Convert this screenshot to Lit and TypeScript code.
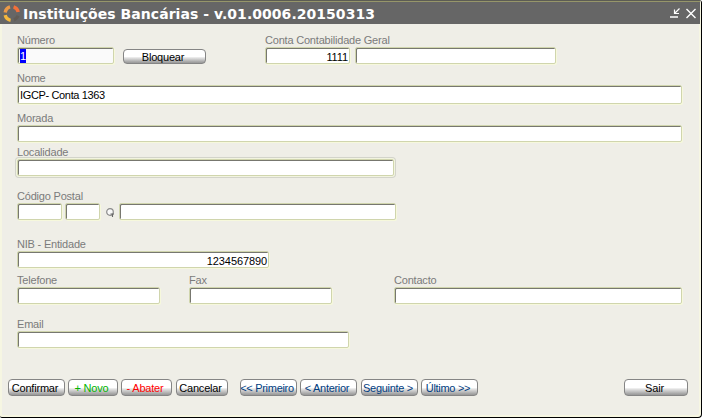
import { LitElement, html, css, svg } from "lit";
import { customElement, property } from "lit/decorators.js";
import { classMap } from "lit/directives/class-map.js";
import { styleMap } from "lit/directives/style-map.js";

@customElement("form-field")
class FormField extends LitElement {
  @property() label = "";
  @property() value = "";
  @property({ type: Number }) width = 100;
  @property({ type: Boolean }) right = false;
  @property({ type: Boolean }) focused = false;
  @property({ type: Boolean }) tall = false;
  @property({ type: Boolean }) framed = false;

  static styles = css`
    :host { display: block; flex: none; }
    .label { height: 13px; line-height: 13px; color: #7b7b7b; white-space: pre; overflow: visible; width: 0; letter-spacing: -0.2px; }
    .box {
      box-sizing: border-box; height: 17px; background: #fff;
      border: 1px solid #d0d5ad; border-radius: 2px;
      box-shadow: inset 1px 1px 0 #77776f, 1px 1px 0 #f6f8dc;
      padding: 1px 1px 0 2px; line-height: 17px; color: #000; white-space: pre; letter-spacing: -0.1px;
    }
    .tall { height: 19px; padding-top: 1px; letter-spacing: -0.35px; }
    .right { text-align: right; }
    .focused { background: #fafafa; }
    .framed { box-shadow: inset 1px 1px 0 #77776f, 0 0 0 1px #f2f4df, 0 0 0 2px #d3d4cb; }
    .sel { display: inline-block; height: 14px; line-height: 15px; background: #00f; color: #fff; vertical-align: top; }
  `;

  render() {
    const cls = { box: true, right: this.right, focused: this.focused, tall: this.tall, framed: this.framed };
    return html`
      <div class="label">${this.label}</div>
      <div class=${classMap(cls)} style=${styleMap({ width: `${this.width}px` })}>${
        this.focused ? html`<span class="sel">${this.value}</span>` : this.value
      }</div>`;
  }
}

@customElement("push-button")
class PushButton extends LitElement {
  @property() tone = "plain";
  @property({ type: Number }) width = 57;
  @property({ type: Number }) height = 17;

  static styles = css`
    :host { display: block; flex: none; }
    button {
      box-sizing: border-box; padding: 1px 3px 0 0; margin: 0;
      border: 1px solid #858585; border-radius: 4px; font: inherit; line-height: 15px;
      letter-spacing: -0.2px; white-space: pre; overflow: hidden;
      background: linear-gradient(#fff 0, #fff 50%, #e4e4e4 60%, #a4a4a4 92%, #999 100%);
      display: flex; justify-content: center; align-items: center;
    }
    .plain { color: #000; }
    .add { color: #00b400; }
    .remove { color: #f00; }
    .nav { color: #003c80; letter-spacing: -0.3px; }
  `;

  render() {
    const size = { width: `${this.width}px`, height: `${this.height}px` };
    return html`<button class=${this.tone} style=${styleMap(size)}><slot></slot></button>`;
  }
}

const logo = svg`
  <g fill="none" stroke-width="3.4">
    <path d="M10.6 1.9A6.8 6.8 0 0 1 15.2 7" stroke="#f2703a"/>
    <path d="M7 1.9A6.8 6.8 0 0 0 2.2 7.4" stroke="#eb9a48"/>
    <path d="M2.2 10.2A6.8 6.8 0 0 0 7.6 15.3" stroke="#f5b83c"/>
    <path d="M15 10.8A6.8 6.8 0 0 1 11 14.9" stroke="#625c56"/>
  </g>`;

@customElement("app-root")
class AppRoot extends LitElement {
  static styles = css`
    :host {
      display: block; width: 703px; height: 419px; box-sizing: border-box; background: #fff;
      font: 11px "Liberation Sans", Arial, sans-serif; overflow: hidden;
    }
    .window {
      box-sizing: border-box; width: 702px; height: 418px; background: #efeee7;
      border-right: 1px solid #000; border-bottom: 1px solid #000; border-radius: 0 3px 4px 2px;
      box-shadow: inset 2px 0 0 #f6f6e2, inset -2px -2px 0 #f6f6e2; overflow: hidden;
    }
    .title {
      box-sizing: border-box; width: 700px; height: 24px; background: #666; border-top: 1px solid #5c5c54;
      display: flex; align-items: center; padding: 0 4px 0 3px; color: #fff;
      box-shadow: inset 0 1px 0 #96966a;
    }
    .logo { width: 17px; height: 17px; margin-top: 1px; flex: none; }
    .name {
      font: bold 14px "DejaVu Sans", Verdana, sans-serif; margin-left: 3px; flex: 1; white-space: pre;
      line-height: 22px; padding-top: 3px; letter-spacing: 0.04px;
    }
    .glyphs { width: 28px; height: 12px; margin-top: 3px; flex: none; }
    .form {
      display: grid; grid-template-rows: 38px 40px 34px 44px 48px 36px 44px 61px 17px;
      padding: 10px 14px 0 17px;
    }
    .row { display: flex; align-items: flex-start; }
    .g3 { margin-left: 3px; }
    .g5 { margin-left: 5px; }
    .g29 { margin-left: 29px; }
    .g59 { margin-left: 59px; }
    .g62 { margin-left: 62px; }
    .block { margin: 15px 0 0 9px; }
    .lens { width: 10px; height: 11px; margin: 17px 4px 0 5px; flex: none; }
    .actions { margin: 0 0 0 -9px; gap: 3px; }
    .g1 { margin-left: 1px; }
    .g9 { margin-left: 9px; }
    .exit { margin-left: 143px; }
  `;

  render() {
    return html`
      <div class="window">
        <div class="title">
          <svg class="logo" viewBox="0 0 17 17">${logo}</svg>
          <div class="name">Instituições Bancárias - v.01.0006.20150313</div>
          <svg class="glyphs" viewBox="0 0 28 12" fill="none" stroke="#fff">
            <path d="M2 9H10" stroke-width="1.4"/>
            <path d="M11.5 0.5L6.5 5.5M6.5 1.5V5.5H11" stroke-width="1.2"/>
            <path d="M18.5 1L27.5 10M27.5 1L18.5 10" stroke-width="1.4"/>
          </svg>
        </div>
        <div class="form">
          <div class="row">
            <form-field label="Número" value="1" width="97" focused></form-field>
            <push-button class="block" width="83" height="15">Bloquear</push-button>
            <form-field class="g59" label="Conta Contabilidade Geral" value="1111" width="85" right></form-field>
            <form-field class="g5" width="201"></form-field>
          </div>
          <div class="row"><form-field label="Nome" value="IGCP- Conta 1363" width="665" tall></form-field></div>
          <div class="row"><form-field label="Morada" width="665"></form-field></div>
          <div class="row"><form-field label="Localidade" width="377" framed></form-field></div>
          <div class="row">
            <form-field label="Código Postal" width="45"></form-field>
            <form-field class="g3" width="35"></form-field>
            <svg class="lens" viewBox="0 0 10 11" fill="none">
              <circle cx="5" cy="5" r="3.3" fill="#f8f8f8" stroke="#8a8a8a" stroke-width="1.2"/>
              <path d="M5.5 7H9M7.5 6.5V10" stroke="#666" stroke-width="1.1"/>
            </svg>
            <form-field width="277"></form-field>
          </div>
          <div class="row"><form-field label="NIB - Entidade" value="1234567890" width="252" right></form-field></div>
          <div class="row">
            <form-field label="Telefone" width="143"></form-field>
            <form-field class="g29" label="Fax" width="143"></form-field>
            <form-field class="g62" label="Contacto" width="288"></form-field>
          </div>
          <div class="row"><form-field label="Email" width="332"></form-field></div>
          <div class="row actions">
            <push-button width="57">Confirmar</push-button>
            <push-button width="50" tone="add">+ Novo</push-button>
            <push-button width="51" tone="remove">- Abater</push-button>
            <push-button class="g1" width="52">Cancelar</push-button>
            <push-button class="g9" width="57" tone="nav">&lt;&lt; Primeiro</push-button>
            <push-button width="57" tone="nav">&lt; Anterior</push-button>
            <push-button class="g1" width="57" tone="nav">Seguinte &gt;</push-button>
            <push-button width="57" tone="nav">Último &gt;&gt;</push-button>
            <push-button class="exit" width="64">Sair</push-button>
          </div>
        </div>
      </div>`;
  }
}
